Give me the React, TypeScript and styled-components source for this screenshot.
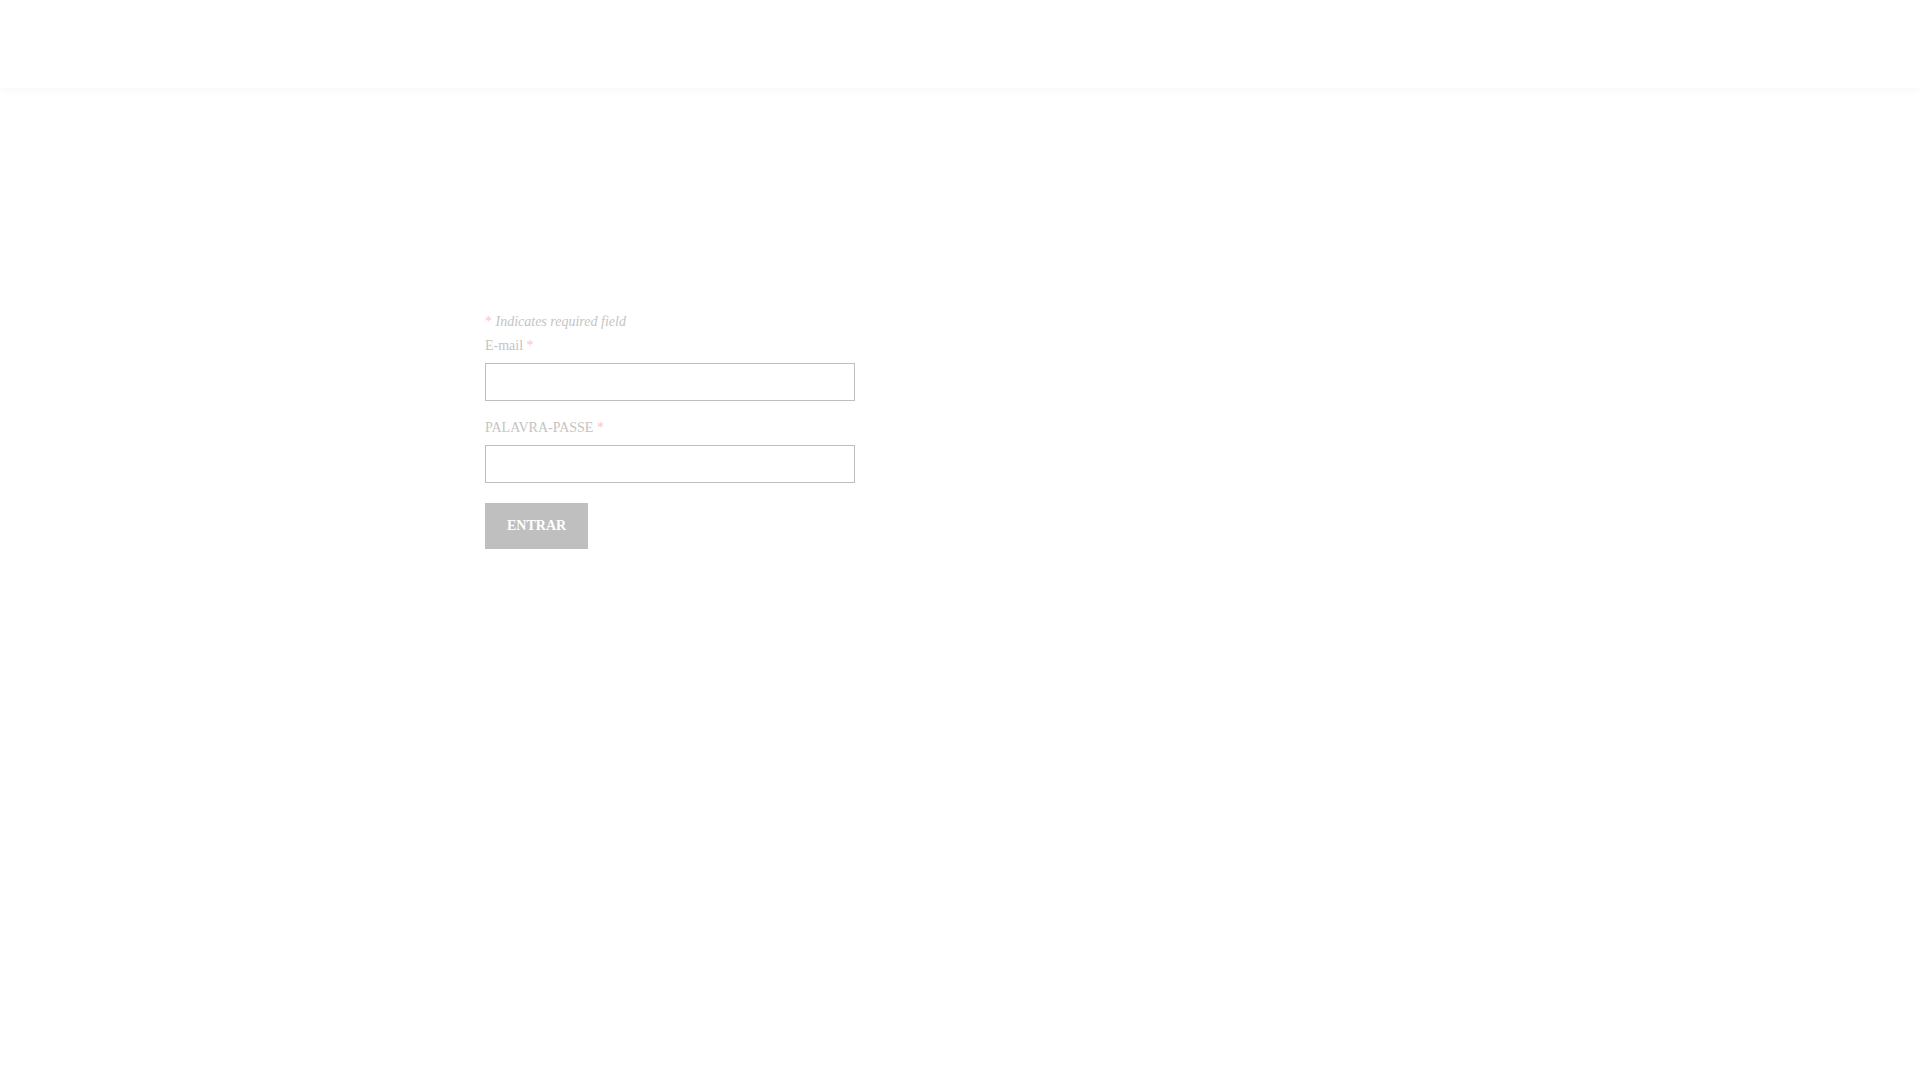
import React from "react";
import styled, { createGlobalStyle } from "styled-components";

const GlobalStyle = createGlobalStyle`
  html, body {
    margin: 0;
    padding: 0;
    background: #ffffff;
  }

  body {
    font-family: "Liberation Serif", "Times New Roman", serif;
    font-size: 14px;
    color: #c4c4c4;
  }

  * {
    box-sizing: border-box;
  }
`;

const Header = styled.header`
  height: 88px;
  background: #ffffff;
  box-shadow: 0 2px 8px rgba(0, 0, 0, 0.035);
  position: relative;
  z-index: 1;
`;

/* the reference was shot with a 15px scrollbar on the right */
const Main = styled.main`
  min-height: 1137px;
  padding: 222px 15px 0 0;
`;

const Container = styled.div`
  max-width: 935px;
  margin: 0 auto;
`;

const Form = styled.form`
  display: flex;
  flex-direction: column;
  width: 370px;
`;

const Note = styled.div`
  font-style: italic;
  line-height: 24px;
`;

const Star = styled.span`
  color: #ffc2c2;
  font-style: normal;
`;

const Field = styled.div`
  display: flex;
  flex-direction: column;
  margin-bottom: 15px;
`;

const Label = styled.label`
  line-height: 24px;
  margin-bottom: 5px;
`;

const Input = styled.input`
  height: 38px;
  width: 370px;
  border: 1px solid #bfbfbf;
  background: #ffffff;
  outline: none;
  padding: 0 10px;
  font-family: inherit;
  font-size: 14px;
`;

const Submit = styled.button`
  align-self: flex-start;
  margin-top: 5px;
  height: 46px;
  padding: 0 22px;
  border: none;
  background: #bfbfbf;
  color: #ffffff;
  font-family: "Liberation Serif", "Times New Roman", serif;
  font-weight: bold;
  font-size: 14px;
  cursor: pointer;
`;

export default function App() {
  return (
    <>
      <GlobalStyle />
      <Header />
      <Main>
        <Container>
          <Form onSubmit={(e) => e.preventDefault()}>
            <Note>
              <Star>*</Star> Indicates required field
            </Note>
            <Field>
              <Label htmlFor="email">
                E-mail <Star>*</Star>
              </Label>
              <Input id="email" type="email" />
            </Field>
            <Field>
              <Label htmlFor="password">
                PALAVRA-PASSE <Star>*</Star>
              </Label>
              <Input id="password" type="password" />
            </Field>
            <Submit type="submit">ENTRAR</Submit>
          </Form>
        </Container>
      </Main>
    </>
  );
}
